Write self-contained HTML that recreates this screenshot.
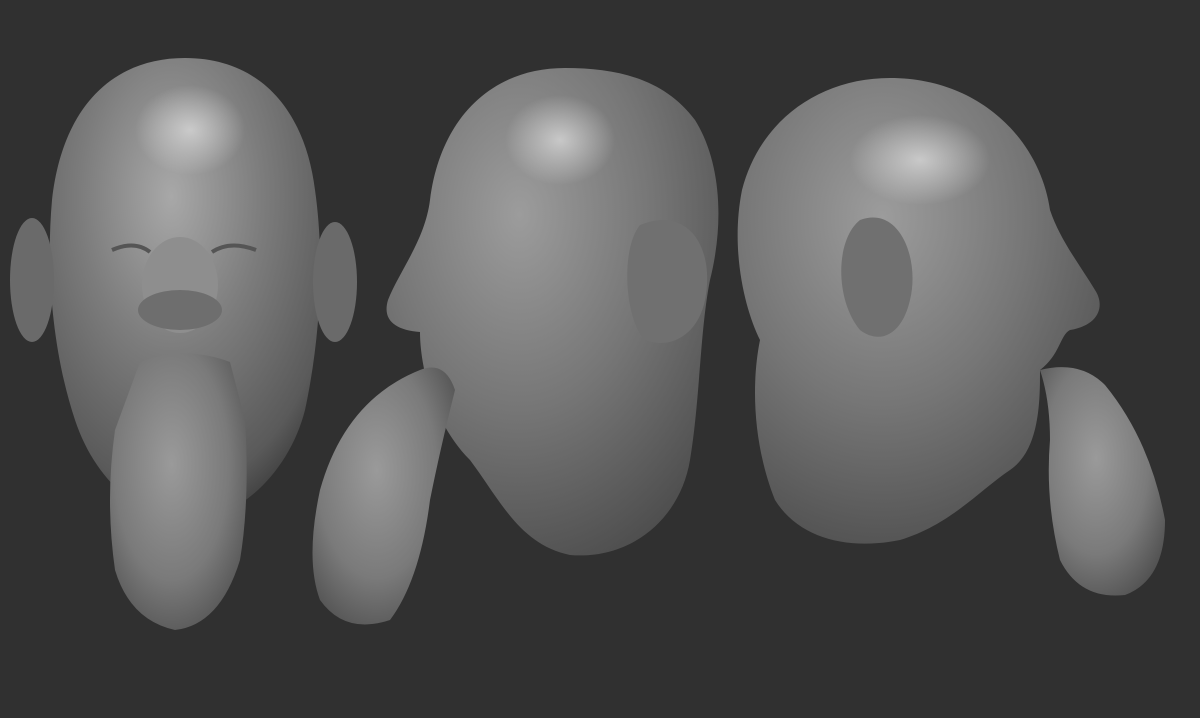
<!DOCTYPE html>
<html><head><meta charset="utf-8"><style>
html,body{margin:0;padding:0;background:#303030;}
svg{display:block}
</style></head><body>
<svg width="1200" height="718" viewBox="0 0 1200 718" xmlns="http://www.w3.org/2000/svg">
<defs>
<radialGradient id="g1" cx="0.45" cy="0.3" r="0.75">
<stop offset="0" stop-color="#a8a8a8"/><stop offset="0.45" stop-color="#7c7c7c"/><stop offset="0.85" stop-color="#5a5a5a"/><stop offset="1" stop-color="#3a3a3a"/>
</radialGradient>
<radialGradient id="g2" cx="0.4" cy="0.3" r="0.8">
<stop offset="0" stop-color="#9c9c9c"/><stop offset="0.5" stop-color="#767676"/><stop offset="1" stop-color="#4a4a4a"/>
</radialGradient>
<radialGradient id="gt" cx="0.45" cy="0.4" r="0.7">
<stop offset="0" stop-color="#9a9a9a"/><stop offset="0.6" stop-color="#7a7a7a"/><stop offset="1" stop-color="#4e4e4e"/>
</radialGradient>
<radialGradient id="hl" cx="0.5" cy="0.5" r="0.5">
<stop offset="0" stop-color="#d8d8d8" stop-opacity="0.8"/><stop offset="1" stop-color="#d8d8d8" stop-opacity="0"/>
</radialGradient>
</defs>
<rect width="1200" height="718" fill="#303030"/>

<!-- Head 1 -->
<path d="M185 58 C110 58 62 110 52 200 C45 280 55 360 75 420 C95 480 140 520 190 520 C240 520 290 470 305 410 C320 340 325 260 315 190 C305 110 260 58 185 58 Z" fill="url(#g1)"/>
<ellipse cx="32" cy="280" rx="22" ry="62" fill="#6a6a6a"/>
<ellipse cx="335" cy="282" rx="22" ry="60" fill="#6a6a6a"/>
<ellipse cx="190" cy="130" rx="55" ry="45" fill="url(#hl)"/>
<ellipse cx="180" cy="285" rx="38" ry="48" fill="#8e8e8e"/>
<ellipse cx="180" cy="310" rx="42" ry="20" fill="#6e6e6e"/>
<path d="M112 250 Q135 240 150 252" stroke="#555" stroke-width="4" fill="none"/>
<path d="M212 252 Q230 240 256 250" stroke="#555" stroke-width="4" fill="none"/>
<path d="M140 362 Q185 345 230 362 L245 420 Q250 500 240 560 Q220 625 175 630 Q130 620 115 570 Q105 500 115 430 Z" fill="url(#gt)"/>

<!-- Head 2 -->
<path d="M565 68 C490 68 440 120 430 200 C425 240 400 270 388 300 C382 320 395 330 420 332 C420 360 430 420 470 460 C500 500 520 545 570 555 C630 560 680 520 690 460 C700 400 700 330 710 280 C725 220 720 160 695 120 C665 80 620 68 565 68 Z" fill="url(#g2)"/>
<ellipse cx="560" cy="140" rx="55" ry="45" fill="url(#hl)"/>
<path d="M640 225 C690 205 715 250 705 300 C698 335 670 350 645 340 C625 320 620 250 640 225 Z" fill="#707070"/>
<path d="M420 370 Q445 360 455 390 Q440 450 430 500 Q420 580 390 620 Q345 635 320 600 Q305 560 320 490 Q345 400 420 370 Z" fill="url(#gt)"/>

<!-- Head 3 -->
<path d="M890 78 C820 78 760 120 742 190 C730 250 745 310 760 340 C750 390 755 450 775 500 C800 540 850 550 900 540 C950 525 980 490 1010 470 C1040 450 1040 400 1040 370 C1060 355 1060 335 1070 330 C1100 325 1105 305 1095 290 C1080 265 1060 240 1050 210 C1040 140 980 78 890 78 Z" fill="url(#g2)"/>
<ellipse cx="920" cy="160" rx="70" ry="45" fill="url(#hl)"/>
<path d="M860 220 C900 205 920 260 910 300 C902 335 880 345 860 330 C835 300 835 240 860 220 Z" fill="#707070"/>
<path d="M1040 370 Q1080 360 1105 385 Q1150 440 1165 520 Q1165 580 1125 595 Q1080 600 1060 560 Q1045 500 1050 440 Q1050 400 1040 370 Z" fill="url(#gt)"/>
</svg>
</body></html>
